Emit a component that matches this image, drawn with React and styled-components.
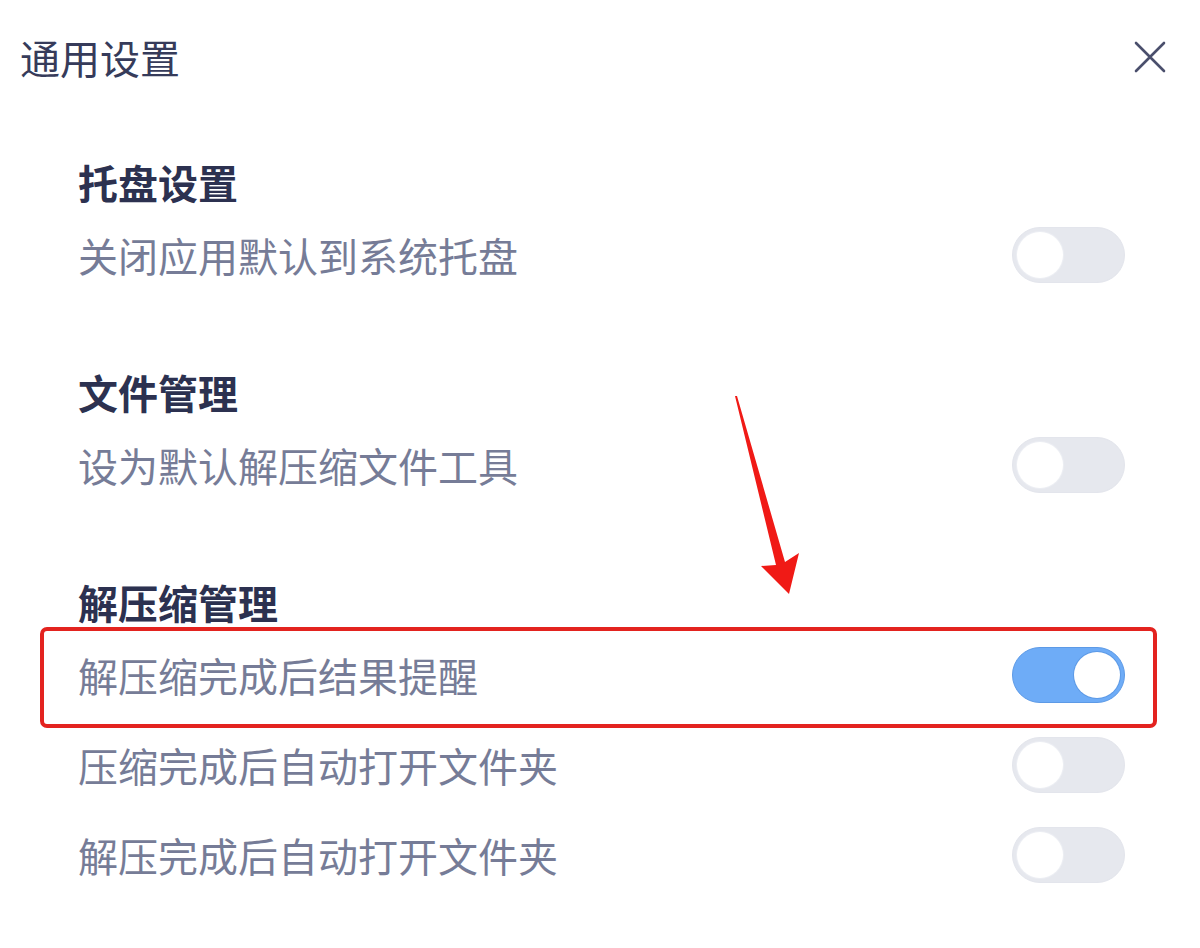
import styled, { createGlobalStyle } from "styled-components";

const GlobalStyle = createGlobalStyle`
  html, body {
    margin: 0;
    padding: 0;
    background: #ffffff;
  }
  body {
    font-family: "Noto Sans CJK SC", "Noto Sans", sans-serif;
  }
`;

const Page = styled.div`
  position: relative;
  width: 1200px;
  height: 948px;
  overflow: hidden;
  background: #ffffff;
`;

const TitleBar = styled.div`
  display: flex;
  align-items: center;
  justify-content: space-between;
  height: 114px;
  padding: 0 32px 0 20px;
`;

const Title = styled.h1`
  margin: 0;
  font-size: 40px;
  font-weight: 400;
  line-height: 1;
  color: #363b5a;
`;

const CloseButton = styled.button`
  display: flex;
  align-items: center;
  justify-content: center;
  width: 36px;
  height: 36px;
  padding: 0;
  border: 0;
  background: none;
  color: #4a4f6c;
  cursor: pointer;
`;

const Body = styled.div`
  display: flex;
  flex-direction: column;
  gap: 64px;
  padding: 40px 75px 0 78px;
`;

const Section = styled.section`
  display: flex;
  flex-direction: column;
`;

const SectionTitle = styled.h2`
  display: flex;
  align-items: center;
  height: 56px;
  margin: 0;
  font-size: 40px;
  font-weight: 700;
  color: #2c3150;
`;

const Row = styled.div`
  position: relative;
  display: flex;
  align-items: center;
  justify-content: space-between;
  height: 90px;

  ${({ $marked }) =>
    $marked &&
    `
    &::after {
      content: "";
      position: absolute;
      left: -38px;
      right: -32px;
      top: -3px;
      bottom: -8px;
      border: 4px solid #e3231f;
      border-radius: 7px;
      pointer-events: none;
    }
  `}
`;

const Label = styled.span`
  font-size: 40px;
  font-weight: 400;
  color: #767c97;
`;

const Track = styled.button`
  position: relative;
  display: flex;
  align-items: center;
  justify-content: ${({ $on }) => ($on ? "flex-end" : "flex-start")};
  width: 113px;
  height: 56px;
  padding: 0 4px;
  border: 1px solid ${({ $on }) => ($on ? "#5d9ae6" : "#e3e5ec")};
  border-radius: 28px;
  background: ${({ $on }) => ($on ? "#6eacf7" : "#e6e8ee")};
  cursor: pointer;
`;

const Knob = styled.span`
  width: 46px;
  height: 46px;
  border-radius: 50%;
  background: #ffffff;
  box-shadow: 0 0 0 1px ${({ $on }) => ($on ? "#5d9ae6" : "#eceef3")};
`;

const Annotation = styled.svg`
  position: absolute;
  left: 0;
  top: 0;
  width: 1200px;
  height: 948px;
  pointer-events: none;
`;

const sections = [
  {
    title: "托盘设置",
    items: [{ label: "关闭应用默认到系统托盘", on: false }],
  },
  {
    title: "文件管理",
    items: [{ label: "设为默认解压缩文件工具", on: false }],
  },
  {
    title: "解压缩管理",
    items: [
      { label: "解压缩完成后结果提醒", on: true, marked: true },
      { label: "压缩完成后自动打开文件夹", on: false },
      { label: "解压完成后自动打开文件夹", on: false },
    ],
  },
];

function Toggle({ on }) {
  return (
    <Track $on={on} role="switch" aria-checked={on}>
      <Knob $on={on} />
    </Track>
  );
}

export default function App() {
  return (
    <>
      <GlobalStyle />
      <Page>
        <TitleBar>
          <Title>通用设置</Title>
          <CloseButton aria-label="关闭">
            <svg width="34" height="34" viewBox="0 0 34 34">
              <path
                d="M3 3 L31 31 M31 3 L3 31"
                stroke="currentColor"
                strokeWidth="2.6"
                strokeLinecap="round"
              />
            </svg>
          </CloseButton>
        </TitleBar>

        <Body>
          {sections.map((section) => (
            <Section key={section.title}>
              <SectionTitle>{section.title}</SectionTitle>
              {section.items.map((item) => (
                <Row key={item.label} $marked={item.marked}>
                  <Label>{item.label}</Label>
                  <Toggle on={item.on} />
                </Row>
              ))}
            </Section>
          ))}
        </Body>

        {/* red annotation arrow */}
        <Annotation viewBox="0 0 1200 948">
          <polygon
            points="735,396 737,396 785,562 799,553 789,594 761,566 776,565"
            fill="#f01a16"
          />
        </Annotation>
      </Page>
    </>
  );
}
